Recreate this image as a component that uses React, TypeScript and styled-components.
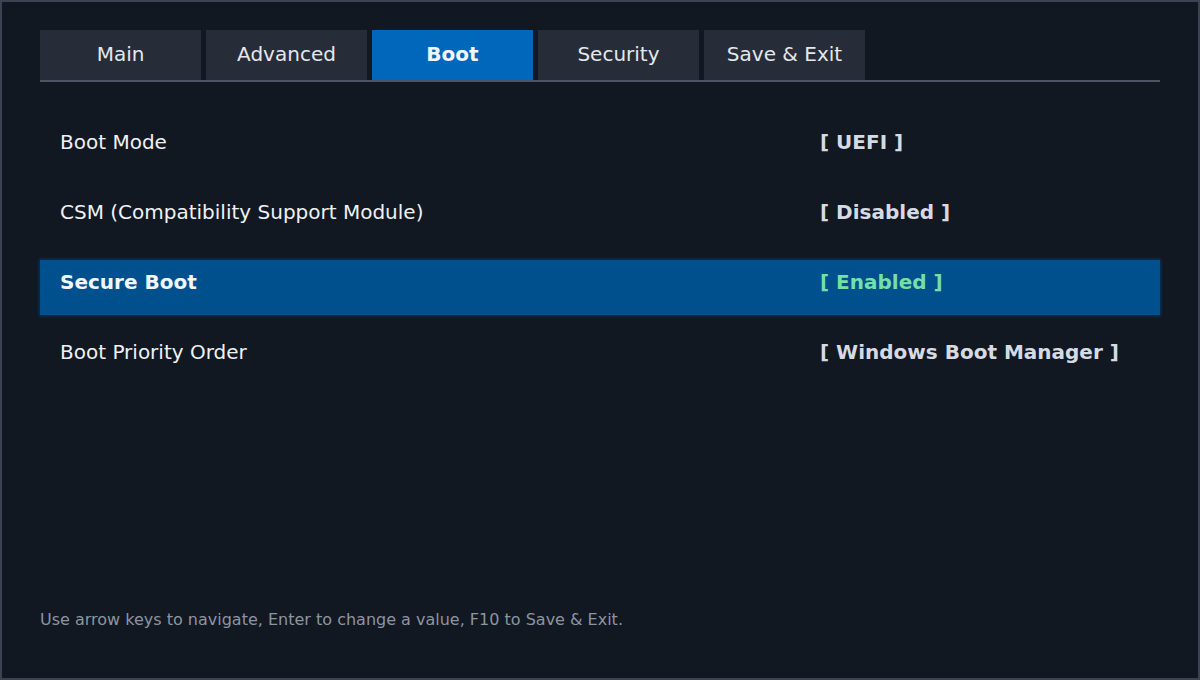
import React from "react";
import styled, { createGlobalStyle } from "styled-components";

interface Setting {
  label: string;
  value: string;
  selected?: boolean;
}

const tabs = ["Main", "Advanced", "Boot", "Security", "Save & Exit"];

const settings: Setting[] = [
  { label: "Boot Mode", value: "UEFI" },
  { label: "CSM (Compatibility Support Module)", value: "Disabled" },
  { label: "Secure Boot", value: "Enabled", selected: true },
  { label: "Boot Priority Order", value: "Windows Boot Manager" },
];

const GlobalStyle = createGlobalStyle`
  html, body {
    margin: 0;
    padding: 0;
    background: #121821;
  }
  * {
    box-sizing: border-box;
  }
`;

const Screen = styled.div`
  width: 1200px;
  height: 680px;
  border: 2px solid #3c4350;
  background: #121821;
  font-family: "DejaVu Sans", sans-serif;
  display: flex;
  flex-direction: column;
  padding: 28px 38px 0;
`;

const TabBar = styled.div`
  display: flex;
  gap: 5px;
  border-bottom: 2px solid #4b5363;
`;

const Tab = styled.div<{ $active?: boolean }>`
  width: 161px;
  height: 50px;
  display: flex;
  align-items: center;
  justify-content: center;
  padding-bottom: 2px;
  font-size: 20px;
  background: ${(p) => (p.$active ? "#0067bb" : "#272d38")};
  color: ${(p) => (p.$active ? "#f2f7fc" : "#e4e8ee")};
  font-weight: ${(p) => (p.$active ? "bold" : "normal")};
`;

const SettingsList = styled.div`
  display: flex;
  flex-direction: column;
  gap: 15px;
  margin-top: 38px;
`;

const Row = styled.div<{ $selected?: boolean }>`
  display: grid;
  grid-template-columns: 760px 1fr;
  height: 55px;
  padding: 8px 20px 0;
  line-height: 28px;
  font-size: 20px;
  background: ${(p) => (p.$selected ? "#00508e" : "transparent")};
  box-shadow: ${(p) =>
    p.$selected ? "0 0 3px 1px rgba(0, 60, 110, 0.9)" : "none"};
`;

const Label = styled.div<{ $selected?: boolean }>`
  color: ${(p) => (p.$selected ? "#f2f7fc" : "#eef1f5")};
  font-weight: ${(p) => (p.$selected ? "bold" : "normal")};
`;

const Value = styled.div<{ $selected?: boolean }>`
  font-weight: bold;
  color: ${(p) => (p.$selected ? "#74dfa6" : "#d6dbe3")};
`;

const Footer = styled.div`
  margin-top: auto;
  padding-bottom: 49px;
  font-size: 16px;
  color: #8c94a1;
`;

const App: React.FC = () => {
  return (
    <>
      <GlobalStyle />
      <Screen>
        <TabBar>
          {tabs.map((t) => (
            <Tab key={t} $active={t === "Boot"}>
              {t}
            </Tab>
          ))}
        </TabBar>
        <SettingsList>
          {settings.map((s) => (
            <Row key={s.label} $selected={s.selected}>
              <Label $selected={s.selected}>{s.label}</Label>
              <Value $selected={s.selected}>[ {s.value} ]</Value>
            </Row>
          ))}
        </SettingsList>
        <Footer>
          Use arrow keys to navigate, Enter to change a value, F10 to Save &amp; Exit.
        </Footer>
      </Screen>
    </>
  );
};

export default App;
